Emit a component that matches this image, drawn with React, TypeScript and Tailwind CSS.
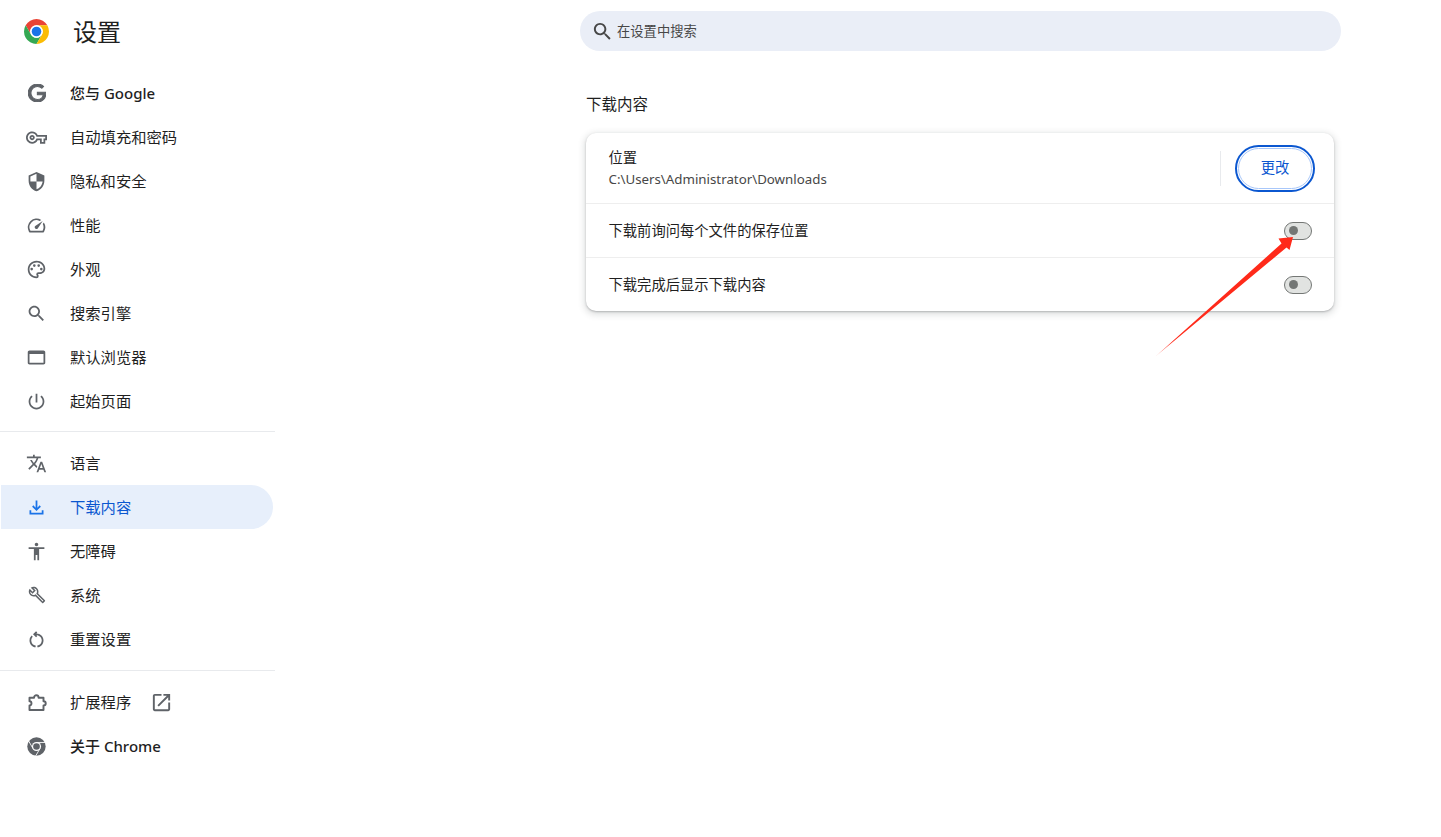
import type { ReactNode } from 'react'

const PATHS = {
  google:
    'M12.48 10.92v3.28h7.84c-.24 1.84-.853 3.187-1.787 4.133-1.147 1.147-2.933 2.4-6.053 2.4-4.827 0-8.6-3.893-8.6-8.72s3.773-8.72 8.6-8.72c2.6 0 4.507 1.027 5.907 2.347l2.307-2.307C18.747 1.44 16.133 0 12.48 0 5.867 0 .307 5.387.307 12s5.56 12 12.173 12c3.573 0 6.267-1.173 8.373-3.36 2.16-2.16 2.84-5.213 2.84-7.667 0-.76-.053-1.467-.173-2.053H12.48z',
  key: 'M22 19h-6v-4h-2.68c-1.14 2.42-3.6 4-6.32 4-3.86 0-7-3.14-7-7s3.14-7 7-7c2.72 0 5.17 1.58 6.32 4H24v6h-2v4zm-4-2h2v-4h2v-2H11.94l-.23-.67C11.01 8.34 9.11 7 7 7c-2.76 0-5 2.24-5 5s2.24 5 5 5c2.11 0 4.01-1.34 4.71-3.33l.23-.67H18v4zM7 15c-1.65 0-3-1.35-3-3s1.35-3 3-3 3 1.35 3 3-1.35 3-3 3zm0-4c-.55 0-1 .45-1 1s.45 1 1 1 1-.45 1-1-.45-1-1-1z',
  shield:
    'M12 1L3 5v6c0 5.55 3.84 10.74 9 12 5.16-1.26 9-6.45 9-12V5l-9-4zm0 10.99h7c-.53 4.12-3.28 7.79-7 8.94V12H5V6.3l7-3.11v8.8z',
  speed:
    'M20.38 8.57l-1.23 1.85a8 8 0 0 1-.22 7.58H5.07A8 8 0 0 1 15.58 6.85l1.85-1.23A10 10 0 0 0 3.35 19a2 2 0 0 0 1.72 1h13.85a2 2 0 0 0 1.74-1 10 10 0 0 0-.27-10.44zm-9.79 6.84a2 2 0 0 0 2.83 0l5.66-8.49-8.49 5.66a2 2 0 0 0 0 2.83z',
  palette:
    'M12 22C6.49 22 2 17.51 2 12S6.49 2 12 2s10 4.04 10 9c0 3.31-2.69 6-6 6h-1.77c-.28 0-.5.22-.5.5 0 .12.05.23.13.33.41.47.64 1.06.64 1.67A2.5 2.5 0 0 1 12 22zm0-18c-4.41 0-8 3.59-8 8s3.59 8 8 8c.28 0 .5-.22.5-.5a.54.54 0 0 0-.14-.35c-.41-.46-.63-1.05-.63-1.65a2.5 2.5 0 0 1 2.5-2.5H16c2.21 0 4-1.79 4-4 0-3.86-3.59-7-8-7z M6.5 10a1.5 1.5 0 1 0 0 3 1.5 1.5 0 0 0 0-3z M9.5 6a1.5 1.5 0 1 0 0 3 1.5 1.5 0 0 0 0-3z M14.5 6a1.5 1.5 0 1 0 0 3 1.5 1.5 0 0 0 0-3z M17.5 10a1.5 1.5 0 1 0 0 3 1.5 1.5 0 0 0 0-3z',
  search:
    'M15.5 14h-.79l-.28-.27C15.41 12.59 16 11.11 16 9.5 16 5.91 13.09 3 9.5 3S3 5.91 3 9.5 5.91 16 9.5 16c1.61 0 3.09-.59 4.23-1.57l.27.28v.79l5 4.99L20.49 19l-4.99-5zm-6 0C7.01 14 5 11.99 5 9.5S7.01 5 9.5 5 14 7.01 14 9.5 11.99 14 9.5 14z',
  browser:
    'M20 4H4c-1.1 0-2 .9-2 2v12c0 1.1.9 2 2 2h16c1.1 0 2-.9 2-2V6c0-1.1-.9-2-2-2zm0 14H4V8h16v10z',
  power:
    'M13 3h-2v10h2V3zm4.83 2.17l-1.42 1.42C17.99 7.86 19 9.81 19 12c0 3.87-3.13 7-7 7s-7-3.13-7-7c0-2.19 1.01-4.14 2.58-5.42L6.17 5.17C4.23 6.82 3 9.26 3 12c0 4.97 4.03 9 9 9s9-4.03 9-9c0-2.74-1.23-5.18-3.17-6.83z',
  translate:
    'M12.87 15.07l-2.54-2.51.03-.03c1.74-1.94 2.98-4.17 3.71-6.53H17V4h-7V2H8v2H1v1.99h11.17C11.5 7.92 10.44 9.75 9 11.35 8.07 10.32 7.3 9.19 6.69 8h-2c.73 1.63 1.73 3.17 2.98 4.56l-5.09 5.02L4 19l5-5 3.11 3.11.76-2.04zM18.5 10h-2L12 22h2l1.12-3h4.75L21 22h2l-4.5-12zm-2.62 7l1.62-4.33L19.12 17h-3.24z',
  download: 'M12 16l-5-5 1.4-1.45 2.6 2.6V4h2v8.15l2.6-2.6L17 11l-5 5zm-8 4v-5h2v3h12v-3h2v5H4z',
  accessibility:
    'M12 2c1.1 0 2 .9 2 2s-.9 2-2 2-2-.9-2-2 .9-2 2-2zm9 7h-6v13h-2v-6h-2v6H9V9H3V7h18v2z',
  wrench:
    'M22.61 18.99l-9.08-9.08c.93-2.34.45-5.1-1.44-7C9.79.61 6.21.4 3.66 2.26L7.5 6.11 6.08 7.52 2.25 3.69C.39 6.23.6 9.82 2.9 12.11c1.86 1.86 4.57 2.35 6.89 1.48l9.11 9.11c.39.39 1.02.39 1.41 0l2.3-2.3c.4-.38.4-1.01 0-1.41zm-3 1.6l-9.46-9.46c-.61.45-1.29.72-2 .82-1.36.2-2.79-.21-3.83-1.25C3.37 9.76 2.93 8.5 3 7.26l3.09 3.09 4.24-4.24-3.09-3.09c1.24-.07 2.49.37 3.44 1.31 1.08 1.08 1.49 2.57 1.24 3.96-.12.71-.42 1.37-.88 1.96l9.45 9.45-.88.89z',
  restart:
    'M6 13c0-1.65.67-3.15 1.76-4.24L6.34 7.34A7.95 7.95 0 0 0 4 13c0 4.08 3.05 7.44 7 7.93v-2.02c-2.83-.48-5-2.94-5-5.91zm14 0c0-4.42-3.58-8-8-8-.06 0-.12.01-.18.01l1.09-1.09L11.5 2.5 8 6l3.5 3.5 1.41-1.41-1.08-1.08c.06 0 .12-.01.17-.01 3.31 0 6 2.69 6 6 0 2.97-2.17 5.43-5 5.91v2.02c3.95-.49 7-3.85 7-7.93z',
  openNew:
    'M19 19H5V5h7V3H5c-1.11 0-2 .9-2 2v14c0 1.1.89 2 2 2h14c1.1 0 2-.9 2-2v-7h-2v7zM14 3v2h3.59l-9.83 9.83 1.41 1.41L19 6.41V10h2V3h-7z',
}

function Icon({ d, className }: { d: string; className: string }) {
  return (
    <svg viewBox="0 0 24 24" fill="currentColor" className={className}>
      <path d={d} />
    </svg>
  )
}

function GoogleMono() {
  return (
    <svg viewBox="0 0 24 24" fill="currentColor" stroke="currentColor" strokeWidth="1.4" className="w-[18px] h-[18px]">
      <path d={PATHS.google} />
    </svg>
  )
}

function ExtensionIcon() {
  return (
    <svg viewBox="0 0 24 24" fill="none" stroke="currentColor" strokeWidth="2.2" strokeLinejoin="round" className="w-[21px] h-[21px]">
      <path d="M4 6.5H9.2C9.2 2.8 14.4 2.8 14.4 6.5H20V10.6C23.4 10.6 23.4 15.4 20 15.4V20.5H4V15.4C7 15.4 7 10.6 4 10.6Z" />
    </svg>
  )
}

function ChromeLogo() {
  return (
    <svg viewBox="0 0 24 24" className="w-[25px] h-[25px]">
      <path fill="#ea4335" d="M1.61 6A12 12 0 0 1 22.39 6H12A6 6 0 0 0 6.8 15Z" />
      <path fill="#34a853" d="M1.61 6A12 12 0 0 0 12 24L17.2 15A6 6 0 0 1 6.8 15Z" />
      <path fill="#fbbc04" d="M22.39 6H12A6 6 0 0 1 17.2 15L12 24A12 12 0 0 0 22.39 6Z" />
      <circle cx="12" cy="12" r="6" fill="#fff" />
      <circle cx="12" cy="12" r="4.6" fill="#1a73e8" />
    </svg>
  )
}

function ChromeMono() {
  return (
    <svg viewBox="0 0 24 24" className="w-[21px] h-[21px]">
      <circle cx="12" cy="12" r="10.5" fill="currentColor" />
      <path d="M12 7.4H23M8 14.3L2.6 5M16 14.3L10.6 23.6" stroke="#fff" strokeWidth="1" />
      <circle cx="12" cy="12" r="5.2" fill="#fff" />
      <circle cx="12" cy="12" r="3.8" fill="currentColor" />
    </svg>
  )
}

function NavItem({
  icon,
  label,
  active,
  medium,
  children,
}: {
  icon: ReactNode
  label: string
  active?: boolean
  medium?: boolean
  children?: ReactNode
}) {
  return (
    <div
      className={`ml-px w-[272px] h-11 flex items-center rounded-r-full text-[15.3px] ${
        active ? 'bg-[#e7effb] text-[#0b57d0]' : 'text-[#1f1f1f]'
      } ${medium ? 'font-medium' : ''}`}
    >
      <span className={`ml-[25px] w-[21px] flex justify-center ${active ? 'text-[#1a73e8]' : 'text-[#5f6368]'}`}>
        {icon}
      </span>
      <span className={`ml-[23px] whitespace-nowrap ${medium ? 'text-[15px]' : ''}`}>{label}</span>
      {children}
    </div>
  )
}

function Toggle() {
  return (
    <div className="w-[28px] h-[18px] rounded-full border border-[#747775] bg-[#e1e3e1] flex items-center pl-[4px]">
      <span className="w-[9px] h-[9px] rounded-full bg-[#747775]" />
    </div>
  )
}

const ic = 'w-[21px] h-[21px]'

export default function App() {
  return (
    <div className="relative flex min-h-screen bg-white font-['Noto_Sans','Noto_Sans_CJK_SC',sans-serif] overflow-hidden">
      <aside className="w-[275px] shrink-0">
        <div className="h-[71px] flex items-start">
          <span className="ml-6 mt-[19px]">
            <ChromeLogo />
          </span>
          <h1 className="ml-6 mt-[14px] text-2xl leading-9 text-[#1f1f1f]">设置</h1>
        </div>

        <NavItem icon={<GoogleMono />} label="您与 Google" medium />
        <NavItem icon={<Icon d={PATHS.key} className={ic} />} label="自动填充和密码" />
        <NavItem icon={<Icon d={PATHS.shield} className={ic} />} label="隐私和安全" />
        <NavItem icon={<Icon d={PATHS.speed} className={ic} />} label="性能" />
        <NavItem icon={<Icon d={PATHS.palette} className={ic} />} label="外观" />
        <NavItem icon={<Icon d={PATHS.search} className={ic} />} label="搜索引擎" />
        <NavItem icon={<Icon d={PATHS.browser} className={ic} />} label="默认浏览器" />
        <NavItem icon={<Icon d={PATHS.power} className={ic} />} label="起始页面" />
        <div className="mt-2 mb-[9px] h-px bg-[#e8eaed]" />
        <NavItem icon={<Icon d={PATHS.translate} className={ic} />} label="语言" />
        <NavItem icon={<Icon d={PATHS.download} className={ic} />} label="下载内容" active />
        <NavItem icon={<Icon d={PATHS.accessibility} className={ic} />} label="无障碍" />
        <NavItem icon={<Icon d={PATHS.wrench} className="w-[18px] h-[18px]" />} label="系统" />
        <NavItem icon={<Icon d={PATHS.restart} className={ic} />} label="重置设置" />
        <div className="mt-[9px] mb-[9px] h-px bg-[#e8eaed]" />
        <NavItem icon={<ExtensionIcon />} label="扩展程序">
          <Icon d={PATHS.openNew} className="ml-[19px] w-[23px] h-[23px] text-[#5f6368]" />
        </NavItem>
        <NavItem icon={<ChromeMono />} label="关于 Chrome" medium />
      </aside>

      <main className="pl-[305px] pt-[11px]">
        <div className="w-[761px] h-10 rounded-full bg-[#eaeef7] flex items-center pl-[11px]">
          <Icon d={PATHS.search} className="w-[23px] h-[23px] text-[#474747]" />
          <span className="ml-[3px] mt-px text-[13.3px] text-[#474747]">在设置中搜索</span>
        </div>

        <div className="ml-[6px] w-[748px]">
          <h2 className="mt-[41px] h-[41px] text-[15.5px] leading-6 text-[#1f1f1f]">下载内容</h2>

          <div className="rounded-[10px] bg-white shadow-[0_1px_2px_rgba(60,64,67,0.3),0_2px_6px_2px_rgba(60,64,67,0.15)]">
            <div className="h-[70px] flex items-center pl-[22.5px] pr-[19px]">
              <div className="flex-1">
                <div className="mt-px text-[14.3px] leading-[22px] text-[#1f1f1f]">位置</div>
                <div className="text-[13.3px] leading-[21px] text-[#474747]">C:\Users\Administrator\Downloads</div>
              </div>
              <div className="w-px h-[35px] bg-[#e8eaed] mr-[14px]" />
              <button className="w-[80px] h-[47px] rounded-full border-2 border-[#0b57d0] p-px">
                <span className="w-full h-full rounded-full border border-[#a8c7fa] flex items-center justify-center text-[14.3px] text-[#0b57d0]">
                  更改
                </span>
              </button>
            </div>
            <div className="h-[54px] border-t border-[#eeeeee] flex items-center justify-between pl-[22.5px] pr-[22px]">
              <span className="text-[14.3px] text-[#1f1f1f]">下载前询问每个文件的保存位置</span>
              <Toggle />
            </div>
            <div className="h-[54px] border-t border-[#eeeeee] flex items-center justify-between pl-[22.5px] pr-[22px]">
              <span className="text-[14.3px] text-[#1f1f1f]">下载完成后显示下载内容</span>
              <Toggle />
            </div>
          </div>
        </div>
      </main>

      {/* red annotation arrow */}
      <svg viewBox="0 0 150 130" className="absolute left-[1150px] top-[230px] w-[150px] h-[130px]">
        <defs>
          <linearGradient id="arrowFade" x1="0" y1="1" x2="1" y2="0">
            <stop offset="0" stopColor="#ff2a1a" stopOpacity="0.5" />
            <stop offset="0.12" stopColor="#ff2a1a" />
            <stop offset="1" stopColor="#ff2a1a" />
          </linearGradient>
        </defs>
        <path d="M6 126L131.5 13.5L128.5 8.5L143 7L139.5 20L136.5 17.5L6 126Z" fill="url(#arrowFade)" />
      </svg>
    </div>
  )
}
